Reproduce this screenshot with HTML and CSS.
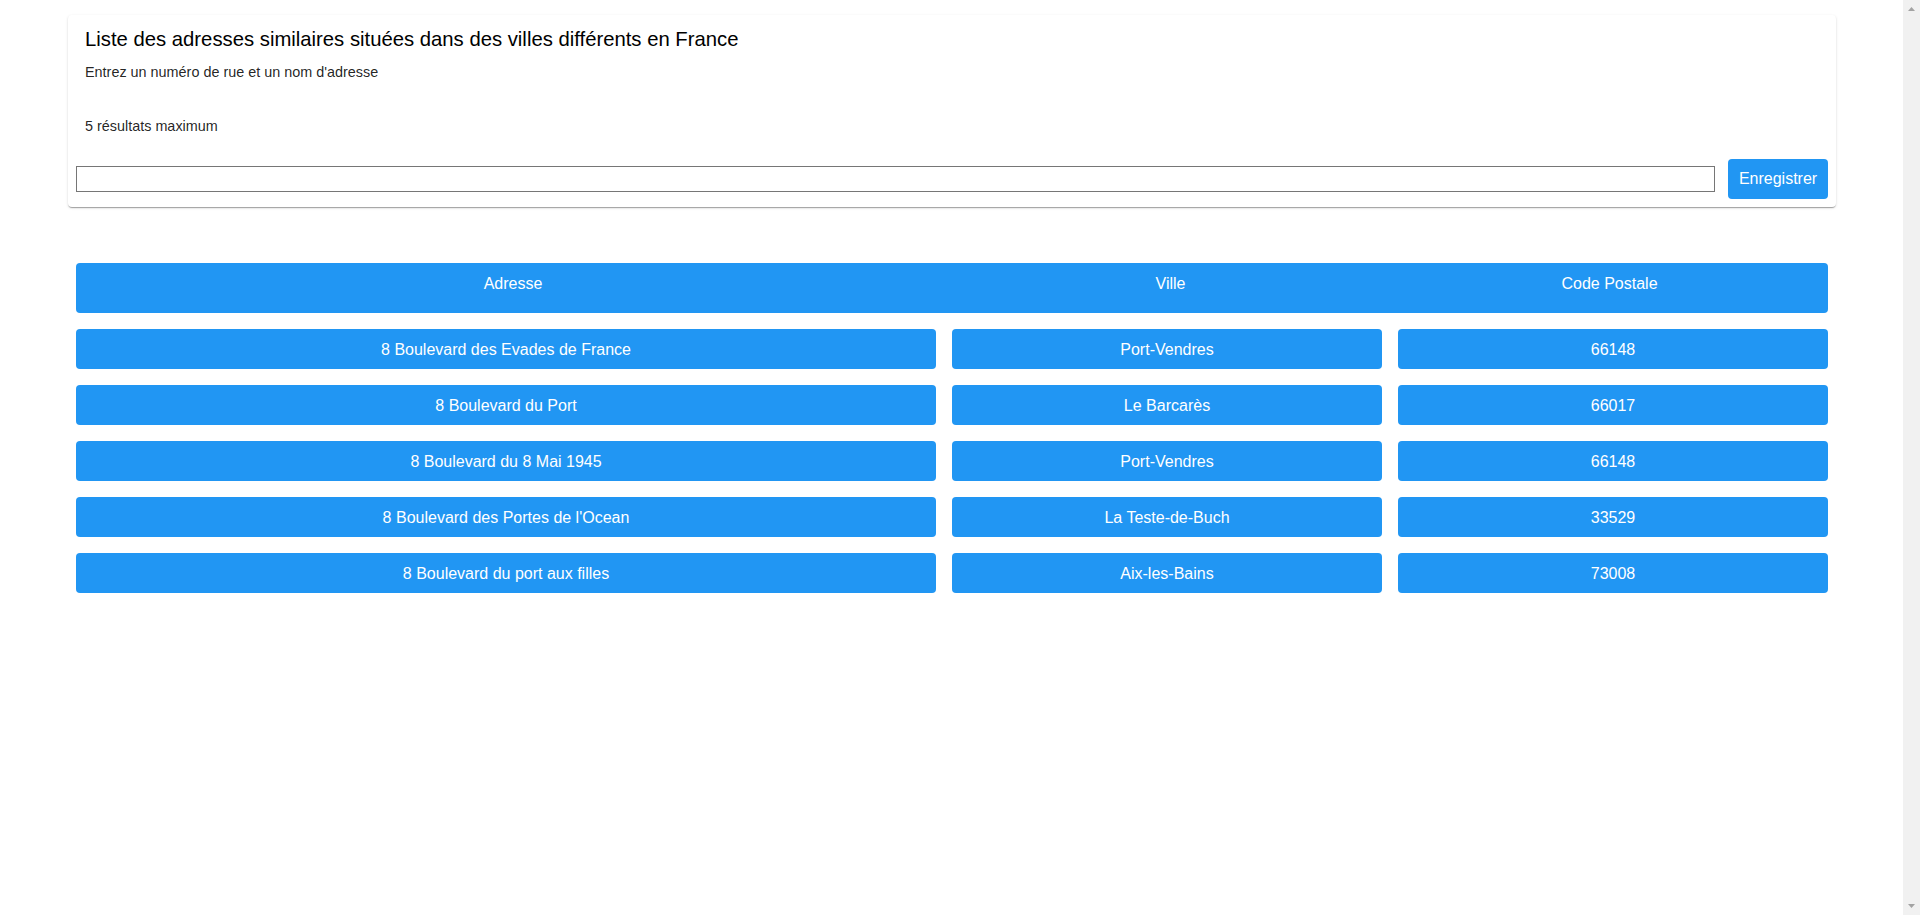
FILE: index.html
```html
<!DOCTYPE html>
<html lang="fr">
<head>
<meta charset="utf-8">
<title>Adresses similaires</title>
<link rel="stylesheet" href="styles.css">
</head>
<body>
<div class="page">
  <section class="card">
    <h1 class="card-title">Liste des adresses similaires situées dans des villes différents en France</h1>
    <p class="hint">Entrez un numéro de rue et un nom d'adresse</p>
    <p class="hint hint-gap">5 résultats maximum</p>
    <form class="search-row">
      <input class="search-input" type="text">
      <button class="btn" type="button">Enregistrer</button>
    </form>
  </section>

  <div class="results">
    <div class="results-head">
      <div class="head-cell">Adresse</div>
      <div class="head-cell">Ville</div>
      <div class="head-cell">Code Postale</div>
    </div>
    <div class="results-row">
      <div class="cell">8 Boulevard des Evades de France</div>
      <div class="cell">Port-Vendres</div>
      <div class="cell">66148</div>
    </div>
    <div class="results-row">
      <div class="cell">8 Boulevard du Port</div>
      <div class="cell">Le Barcarès</div>
      <div class="cell">66017</div>
    </div>
    <div class="results-row">
      <div class="cell">8 Boulevard du 8 Mai 1945</div>
      <div class="cell">Port-Vendres</div>
      <div class="cell">66148</div>
    </div>
    <div class="results-row">
      <div class="cell">8 Boulevard des Portes de l'Ocean</div>
      <div class="cell">La Teste-de-Buch</div>
      <div class="cell">33529</div>
    </div>
    <div class="results-row">
      <div class="cell">8 Boulevard du port aux filles</div>
      <div class="cell">Aix-les-Bains</div>
      <div class="cell">73008</div>
    </div>
  </div>
</div>

<div class="fake-scrollbar" aria-hidden="true">
  <svg class="sb-arrow" width="17" height="17" viewBox="0 0 17 17"><path d="M5 11h7L8.5 7z" fill="#a3a3a3"/></svg>
  <svg class="sb-arrow" width="17" height="17" viewBox="0 0 17 17"><path d="M5 6h7L8.5 10z" fill="#a3a3a3"/></svg>
</div>
</body>
</html>
```

FILE: styles.css
```css
body {
  margin: 0;
  background: #ffffff;
  font-family: "Liberation Sans", Arial, sans-serif;
  color: rgba(0, 0, 0, 0.87);
}

.page {
  width: 1768px;
  margin-left: 68px;
  padding-top: 15px;
}

.card {
  background: #ffffff;
  border-radius: 4px;
  padding: 10px 8px 8px;
  box-shadow: 0 2px 1px -1px rgba(0, 0, 0, 0.2), 0 1px 1px 0 rgba(0, 0, 0, 0.14), 0 1px 3px 0 rgba(0, 0, 0, 0.12);
}

.card-title {
  margin: 0;
  padding-left: 9px;
  font-size: 20.3px;
  line-height: 28px;
  font-weight: 400;
  color: #000000;
}

.hint {
  margin: 9px 0 0;
  padding-left: 9px;
  font-size: 14.4px;
  line-height: 20px;
  color: rgba(0, 0, 0, 0.87);
}

.hint-gap {
  margin-top: 34px;
}

.search-row {
  display: flex;
  align-items: center;
  gap: 13px;
  margin: 23px 0 0;
  height: 40px;
}

.search-input {
  flex: 1;
  height: 26px;
  box-sizing: border-box;
  border: 1px solid #767676;
  border-radius: 0;
  padding: 1px 2px;
  font-family: "Liberation Sans", Arial, sans-serif;
  font-size: 14px;
  outline: none;
}

.btn {
  width: 100px;
  height: 40px;
  border: none;
  border-radius: 4px;
  background: #2196f3;
  color: #ffffff;
  font-family: "Liberation Sans", Arial, sans-serif;
  font-size: 16px;
  padding: 0;
  cursor: pointer;
}

.results {
  margin: 56px 8px 0;
  display: flex;
  flex-direction: column;
  gap: 16px;
}

.results-head {
  display: grid;
  grid-template-columns: 874px 441px 1fr;
  height: 50px;
  box-sizing: border-box;
  padding-top: 9px;
  background: #2196f3;
  border-radius: 4px;
}

.head-cell {
  color: #ffffff;
  font-size: 16px;
  line-height: 24px;
  text-align: center;
}

.results-row {
  display: grid;
  grid-template-columns: 860px 430px 1fr;
  gap: 16px;
}

.cell {
  height: 40px;
  box-sizing: border-box;
  padding-top: 1px;
  background: #2196f3;
  border-radius: 4px;
  color: #ffffff;
  font-size: 16px;
  line-height: 40px;
  text-align: center;
}

.fake-scrollbar {
  position: fixed;
  top: 0;
  right: 0;
  bottom: 0;
  width: 17px;
  background: #f1f1f1;
  display: flex;
  flex-direction: column;
  justify-content: space-between;
}

.sb-arrow {
  display: block;
}
```
